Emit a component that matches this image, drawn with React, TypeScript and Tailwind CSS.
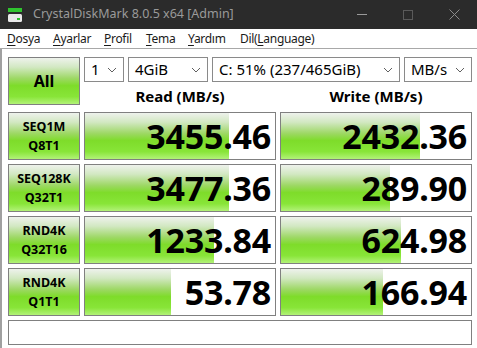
import React from "react";

const FONT = { fontFamily: '"Noto Sans", "Open Sans", sans-serif' };

const rows = [
  { l1: "SEQ1M", l2: "Q8T1", r: "3455.46", w: "2432.36", rf: 144, wf: 139 },
  { l1: "SEQ128K", l2: "Q32T1", r: "3477.36", w: "289.90", rf: 144, wf: 109 },
  { l1: "RND4K", l2: "Q32T16", r: "1233.84", w: "624.98", rf: 129, wf: 120 },
  { l1: "RND4K", l2: "Q1T1", r: "53.78", w: "166.94", rf: 86, wf: 102 },
];

const GRAD =
  "bg-[linear-gradient(to_bottom,#eef2ec_0%,#d2e8c2_20%,#9ed866_44%,#7edc2a_60%,#88e538_84%,#b2f278_100%)]";

function Chevron() {
  return (
    <svg width="10" height="6" viewBox="0 0 10 6" className="shrink-0">
      <polyline points="1,1 5,5 9,1" fill="none" stroke="#606060" strokeWidth="1" />
    </svg>
  );
}

function Drop({ w, text }: { w: string; text: string }) {
  return (
    <div className={`${w} h-[25px] border border-[#8a8a8a] bg-white flex items-center justify-between pl-[6px] pr-[6px]`}>
      <span className="text-[15px] text-black leading-none">{text}</span>
      <Chevron />
    </div>
  );
}

function Cell({ value, fill }: { value: string; fill: number }) {
  return (
    <div className="relative w-[192px] h-[48px] border border-[#808080] bg-white overflow-hidden">
      <div className={`absolute left-0 top-0 bottom-0 ${GRAD}`} style={{ width: fill }} />
      <div className="relative h-full flex items-center justify-end pr-[4px] text-[34px] font-bold text-black leading-none tracking-[-0.2px]">
        {value}
      </div>
    </div>
  );
}

export default function App() {
  const menu: [string, string, number][] = [
    ["D", "osya", 7],
    ["A", "yarlar", 53],
    ["P", "rofil", 104],
    ["T", "ema", 146],
    ["Y", "ardım", 188],
  ];
  return (
    <div className="w-[477px] h-[348px] bg-white overflow-hidden flex flex-col" style={FONT}>
      <div className="h-[29px] bg-[#2b2b2b] flex items-center relative shrink-0">
        <svg width="16" height="16" viewBox="0 0 16 16" className="ml-[7px]">
          <rect x="1" y="1" width="14" height="4" fill="#2fc42f" />
          <rect x="1" y="7" width="14" height="8" rx="1.5" fill="#e8e8e8" />
          <rect x="10" y="11" width="3" height="2" fill="#2fc42f" />
        </svg>
        <span className="ml-[10px] text-[12.5px] text-[#9a9a9a]">CrystalDiskMark 8.0.5 x64 [Admin]</span>
        <div className="absolute right-0 top-0 h-full flex items-center">
          <div className="w-[46px] h-full flex items-center justify-center">
            <div className="w-[10px] h-px bg-[#9a9a9a]" />
          </div>
          <div className="w-[46px] h-full flex items-center justify-center">
            <div className="w-[10px] h-[10px] border border-[#5a5a5a]" />
          </div>
          <div className="w-[46px] h-full flex items-center justify-center">
            <svg width="11" height="11" viewBox="0 0 11 11">
              <path d="M0.5 0.5 L10.5 10.5 M10.5 0.5 L0.5 10.5" stroke="#8a8a8a" strokeWidth="1" />
            </svg>
          </div>
        </div>
      </div>
      <div className="h-[19px] bg-white flex items-center text-[12px] text-[#1a1a1a] shrink-0 border-b border-[#a8a8a8] box-content">
        <div className="flex">
          {menu.map(([a, b, x], i) => (
            <span
              key={a + b}
              className={
                i === 0
                  ? "w-[53px] pl-[7px] tracking-[-0.3px]"
                  : i === 1
                  ? "w-[51px] tracking-[-0.3px]"
                  : i === 2
                  ? "w-[42px] tracking-[-0.3px]"
                  : i === 3
                  ? "w-[42px] tracking-[-0.3px]"
                  : "w-[52px] tracking-[-0.3px]"
              }
              data-x={x}
            >
              <span className="underline underline-offset-2">{a}</span>
              {b}
            </span>
          ))}
          <span className="tracking-[-0.3px]">
            Dil(<span className="underline underline-offset-2">L</span>anguage)
          </span>
        </div>
      </div>
      <div className="flex-1 border-l-2 border-[#a0a0a0] pl-[6px] pt-[8px] flex flex-col gap-[4px]">
        <div className="flex gap-[4px]">
          <div className={`w-[72px] h-[48px] border border-[#808080] ${GRAD} flex items-center justify-center text-[16px] font-bold text-black`}>
            All
          </div>
          <div className="w-[388px] flex flex-col">
            <div className="flex gap-[4px]">
              <Drop w="w-[40px]" text="1" />
              <Drop w="w-[80px]" text="4GiB" />
              <Drop w="w-[188px]" text="C: 51% (237/465GiB)" />
              <Drop w="w-[68px]" text="MB/s" />
            </div>
            <div className="flex-1 grid grid-cols-2 gap-[4px] items-center text-[15px] font-bold text-black">
              <div className="text-center pt-[3px]">Read (MB/s)</div>
              <div className="text-center pt-[3px]">Write (MB/s)</div>
            </div>
          </div>
        </div>
        {rows.map((r, i) => (
          <div key={i} className="flex gap-[4px]">
            <div className={`w-[72px] h-[48px] border border-[#808080] ${GRAD} flex flex-col items-center justify-center text-[12.5px] font-bold text-black leading-[19px]`}>
              <span>{r.l1}</span>
              <span>{r.l2}</span>
            </div>
            <Cell value={r.r} fill={r.rf} />
            <Cell value={r.w} fill={r.wf} />
          </div>
        ))}
        <div className="w-[464px] h-[25px] border border-[#808080] bg-white" />
      </div>
    </div>
  );
}
